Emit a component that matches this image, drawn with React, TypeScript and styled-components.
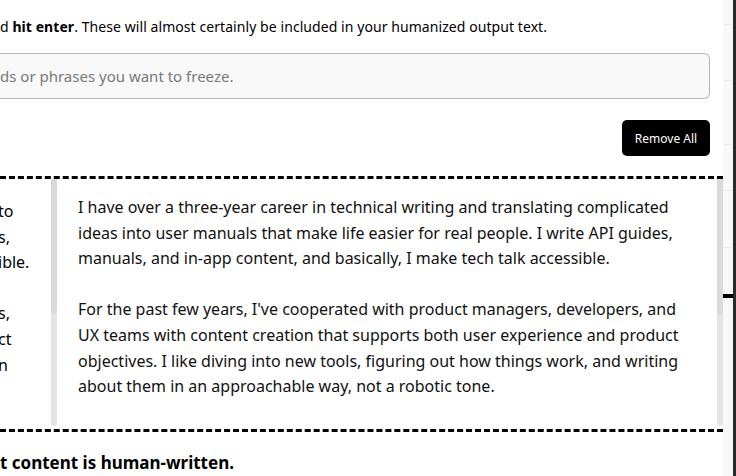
import styled, { createGlobalStyle } from "styled-components";

const GlobalStyle = createGlobalStyle`
  html, body {
    margin: 0;
    padding: 0;
    background: #fff;
    overflow: hidden;
  }
  body {
    font-family: "Noto Sans", "Open Sans", Arial, sans-serif;
    color: #000;
  }
`;

const Page = styled.div`
  display: flex;
  width: 736px;
  height: 476px;
  overflow: hidden;
`;

const Main = styled.main`
  width: 723px;
  display: flex;
  flex-direction: column;
`;

const FreezeSection = styled.section`
  display: flex;
  flex-direction: column;
  padding: 17px 13px 0 0;
`;

const Hint = styled.p`
  margin: 0;
  font-size: 14px;
  letter-spacing: 0.07px;
  line-height: 20px;
  white-space: nowrap;
  b {
    font-weight: 700;
  }
`;

const FreezeInput = styled.div`
  margin-top: 16px;
  height: 46px;
  box-sizing: border-box;
  display: flex;
  align-items: center;
  background: #f9f9f9;
  border: 1px solid #b4b4b4;
  border-left: none;
  border-radius: 0 6px 6px 0;
  font-size: 15px;
  color: #787878;
  white-space: nowrap;
`;

const Actions = styled.div`
  display: flex;
  justify-content: flex-end;
  margin-top: 21px;
`;

const RemoveButton = styled.button`
  width: 88px;
  height: 36px;
  border: none;
  border-radius: 5px;
  background: #000;
  color: #fff;
  font-family: "Noto Sans", Arial, sans-serif;
  font-size: 12px;
  cursor: pointer;
`;

const Compare = styled.div`
  margin-top: 20px;
  display: flex;
  height: 250px;
  border-top: 3px dashed #000;
  border-bottom: 3px dashed #000;
`;

const Panel = styled.div<{ $width?: number }>`
  display: flex;
  ${({ $width }) => ($width ? `width: ${$width}px;` : "flex: 1;")}
  overflow: hidden;
`;

const PanelText = styled.div<{ $padTop: number; $padLeft: number }>`
  flex: 1;
  padding: ${({ $padTop }) => $padTop}px 0 0 ${({ $padLeft }) => $padLeft}px;
  font-size: 16px;
  line-height: 25.6px;
  white-space: nowrap;
  p {
    margin: 0 0 25.6px;
  }
`;

// left column only shows the tail of each line, the rest is scrolled out of view
const Tails = styled(PanelText)`
  margin-left: -2px;
`;

const Wrapped = styled(PanelText)`
  white-space: normal;
  padding-right: 32px;
  color: #111;
`;

const Scrollbar = styled.div<{ $thumb: number; $gap?: number }>`
  width: 6px;
  margin-right: ${({ $gap }) => $gap ?? 0}px;
  margin-bottom: 3px;
  background: #e4e4e4;
  border-radius: 0 0 3px 3px;
  &::before {
    content: "";
    display: block;
    height: ${({ $thumb }) => $thumb}px;
    background: #dadada;
    border-radius: 0 0 3px 3px;
  }
`;

const Verdict = styled.p`
  margin: 20px 0 0;
  font-size: 17px;
  font-weight: 700;
  line-height: 22px;
  white-space: nowrap;
`;

const Aside = styled.aside`
  width: 10px;
  background: #f8f8f8;
  border-right: 3px solid #2b2b2b;
  display: flex;
  flex-direction: column;
`;

const AsideRow = styled.div<{ $h: number }>`
  height: ${({ $h }) => $h}px;
  border-bottom: 1px solid #ececec;
`;

const AsideMark = styled.div`
  margin-top: 46px;
  height: 4px;
  background: #000;
`;

export default function App() {
  return (
    <>
      <GlobalStyle />
      <Page>
        <Main>
          <FreezeSection>
            <Hint>
              d <b>hit enter</b>. These will almost certainly be included in your humanized output text.
            </Hint>
            <FreezeInput>ds or phrases you want to freeze.</FreezeInput>
            <Actions>
              <RemoveButton>Remove All</RemoveButton>
            </Actions>
          </FreezeSection>

          <Compare>
            <Panel $width={58}>
              <Tails $padTop={20} $padLeft={0}>
                <p>
                  to<br />s,<br />ible.
                </p>
                <p>
                  s,<br />ct<br />n
                </p>
              </Tails>
              <Scrollbar $thumb={134} $gap={1} />
            </Panel>
            <Panel>
              <Wrapped $padTop={16} $padLeft={20}>
                <p>
                  I have over a three-year career in technical writing and translating complicated ideas
                  into user manuals that make life easier for real people. I write API guides, manuals,
                  and in-app content, and basically, I make tech talk accessible.
                </p>
                <p>
                  For the past few years, I've cooperated with product managers, developers, and UX teams
                  with content creation that supports both user experience and product objectives. I like
                  diving into new tools, figuring out how things work, and writing about them in an
                  approachable way, not a robotic tone.
                </p>
              </Wrapped>
              <Scrollbar $thumb={136} />
            </Panel>
          </Compare>

          <Verdict>t content is human-written.</Verdict>
        </Main>

        <Aside>
          <AsideRow $h={24} />
          <AsideRow $h={55} />
          <AsideRow $h={63} />
          <AsideRow $h={45} />
          <AsideRow $h={56} />
          <AsideMark />
        </Aside>
      </Page>
    </>
  );
}
